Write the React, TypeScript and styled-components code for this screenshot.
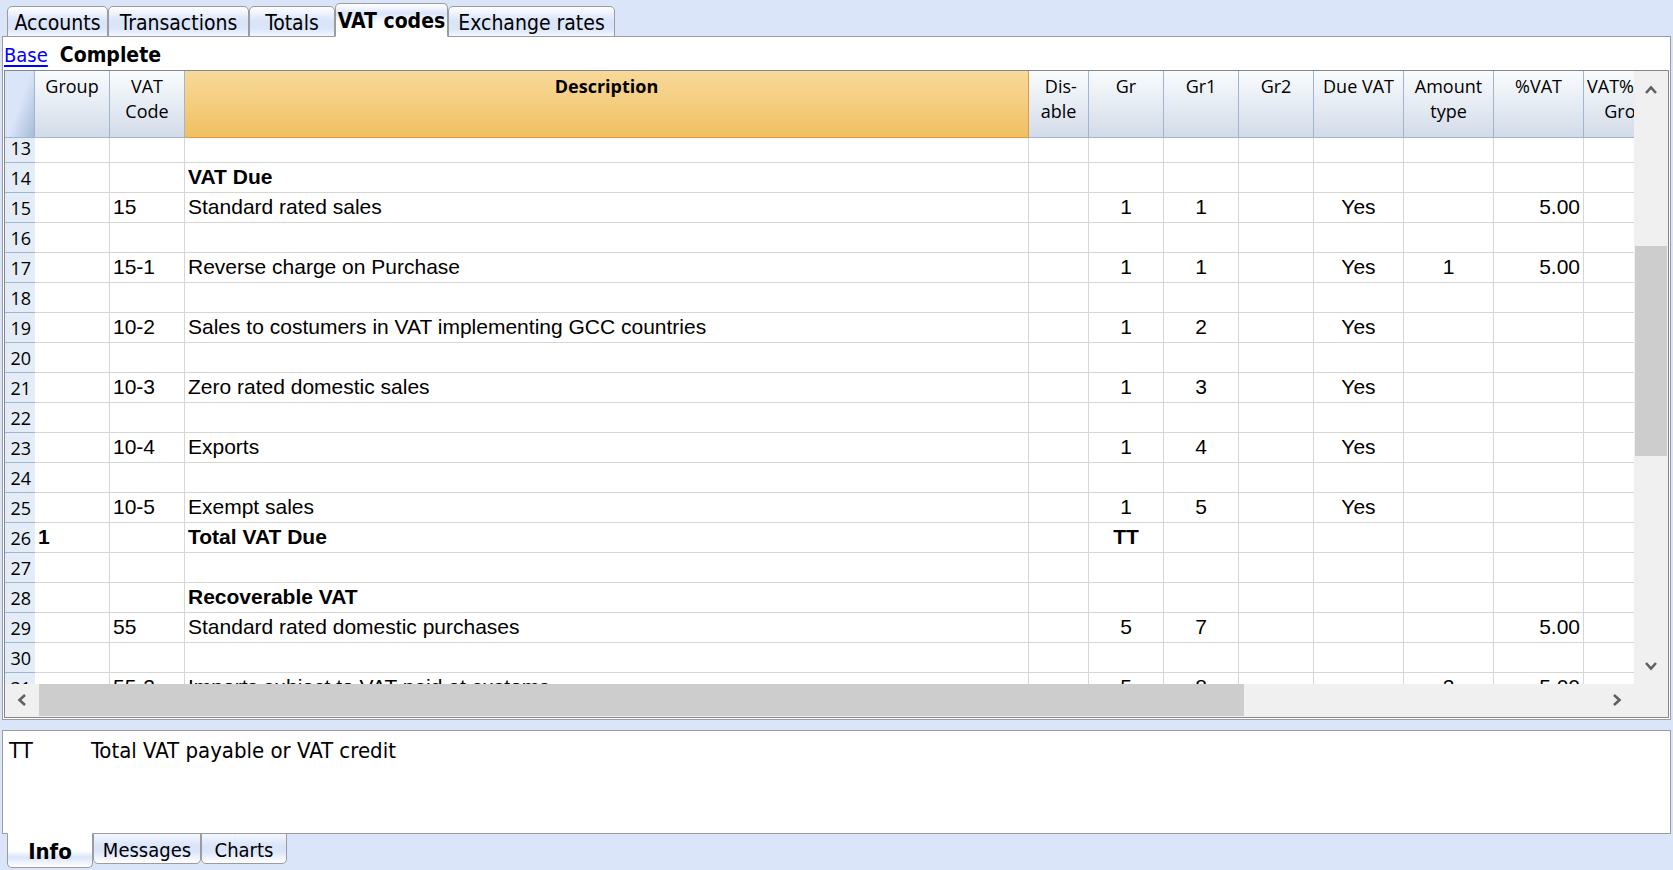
import React from "react";
import styled, { createGlobalStyle, css } from "styled-components";

const uiFont = '"DejaVu Sans Condensed", "Noto Sans", sans-serif';
const headFont = '"Open Sans", "Noto Sans", sans-serif';
const cellFont = '"Liberation Sans", Arial, sans-serif';

const GlobalStyle = createGlobalStyle`
  *, *::before, *::after { box-sizing: border-box; }
  body { margin: 0; background: #dbe5fa; color: #000; }
`;

const Page = styled.div`
  display: flex;
  flex-direction: column;
  height: 100vh;
  padding: 3px 2px 2px;
  font-family: ${uiFont};
  font-size: 21px;
`;

const TabBar = styled.nav<{ $bottom?: boolean }>`
  display: flex;
  align-items: ${(p) => (p.$bottom ? "flex-start" : "flex-end")};
  flex: none;
  height: ${(p) => (p.$bottom ? 35 : 34)}px;
  padding-left: 5px;
  position: relative;
  ${(p) => (p.$bottom ? "margin-top: -1px;" : "margin-bottom: -1px;")}
`;

const Tab = styled.button<{ $width: number; $active?: boolean; $bottom?: boolean }>`
  flex: none;
  display: flex;
  align-items: center;
  justify-content: center;
  width: ${(p) => p.$width}px;
  height: ${(p) => (p.$active ? 34 : 31)}px;
  padding: 2px 0 0;
  border: 1px solid #9c9c9c;
  font-family: ${uiFont};
  font-size: ${(p) => (p.$bottom ? 20 : 21)}px;
  line-height: 28px;
  color: #000;
  white-space: nowrap;
  ${(p) =>
    p.$bottom
      ? css`
          border-radius: 0 0 5px 5px;
          background: linear-gradient(#f2f6fe, #dbe5fa 40%, #dbe5fa 60%, #fff);
        `
      : css`
          border-radius: 5px 5px 0 0;
          background: linear-gradient(#fff, #dbe5fa 45%, #dbe5fa 75%, #f2f6fe);
        `}
  ${(p) =>
    p.$active &&
    css`
      font-weight: bold;
      ${p.$bottom
        ? "height: 35px; font-size: 22px; border-top-color: #fff; background: linear-gradient(#fff 50%, #dbe5fa 70%, #fff);"
        : "border-bottom-color: #fff; background: linear-gradient(#fff, #dbe5fa 30%, #fff 60%);"}
    `}
`;

const Workspace = styled.main`
  flex: 1;
  min-height: 0;
  display: flex;
  flex-direction: column;
  border: 1px solid #9c9c9c;
  background: #fff;
  padding: 0 1px 1px;
`;

const Views = styled.div`
  display: flex;
  align-items: center;
  gap: 12px;
  flex: none;
  height: 33px;
  padding-top: 2px;
`;

const ViewLink = styled.a`
  font-size: 20px;
  color: #00f;
  text-underline-offset: 3px;
`;

const Grid = styled.section`
  flex: 1;
  min-height: 0;
  display: grid;
  grid-template-columns: minmax(0, 1fr) 34px;
  grid-template-rows: minmax(0, 1fr) 33px;
  border: 1px solid #828790;
  background: #f0f0f0;
`;

const Viewport = styled.div`
  overflow: hidden;
  background: #fff;
`;

const Table = styled.table`
  width: calc(100% + 40px);
  table-layout: fixed;
  border-collapse: separate;
  border-spacing: 0;
  font-family: ${cellFont};
  font-size: 21px;
`;

const HeadCell = styled.th<{ $selected?: boolean }>`
  height: 67px;
  padding: 3px 0 0;
  vertical-align: top;
  font-family: ${headFont};
  font-size: 18px;
  line-height: 25px;
  font-weight: ${(p) => (p.$selected ? "bold" : "normal")};
  white-space: pre-line;
  border-right: 1px solid ${(p) => (p.$selected ? "#e8983a" : "#9fb6ce")};
  border-bottom: 1px solid ${(p) => (p.$selected ? "#e8983a" : "#9fb6ce")};
  background: ${(p) =>
    p.$selected
      ? "linear-gradient(#f8d99a, #f0c061)"
      : "linear-gradient(#f9fcfd, #d3dbe9)"};
`;

const CornerCell = styled.th`
  height: 67px;
  padding: 0;
  border-right: 1px solid #9fb6ce;
  border-bottom: 1px solid #9fb6ce;
  background: linear-gradient(110deg, #dbe5fa 50%, #a5bcd6);
`;

const RowNumber = styled.th`
  padding: 0 4px 4px 0;
  vertical-align: bottom;
  text-align: right;
  font-family: ${headFont};
  font-size: 18px;
  line-height: 20px;
  font-weight: normal;
  background: #e4ecf7;
  border-bottom: 1px solid #9fb6ce;
`;

const Row = styled.tr<{ $bold?: boolean; $cut?: boolean }>`
  height: ${(p) => (p.$cut ? 25 : 30)}px;
  font-weight: ${(p) => (p.$bold ? "bold" : "normal")};
`;

const Cell = styled.td<{ $align?: "left" | "center" | "right" }>`
  padding: 0 3px 3px;
  vertical-align: bottom;
  text-align: ${(p) => p.$align ?? "left"};
  line-height: 24px;
  white-space: nowrap;
  border-right: 1px solid #d6d6d6;
  border-bottom: 1px solid #d6d6d6;
`;

const VerticalBar = styled.div`
  display: flex;
  flex-direction: column;
  padding: 0 1px;
`;

const HorizontalBar = styled.div`
  display: flex;
  padding: 0 0 1px;
`;

const ArrowButton = styled.button`
  flex: none;
  display: flex;
  align-items: center;
  justify-content: center;
  width: 34px;
  height: 32px;
  padding: 0;
  border: 0;
  background: none;
  ${VerticalBar} & {
    width: 32px;
    height: 38px;
  }
`;

const Track = styled.div<{ $before: number; $thumb: number; $after: number; $vertical?: boolean }>`
  flex: 1;
  min-width: 0;
  min-height: 0;
  display: grid;
  ${(p) => {
    const t = `${p.$before}fr ${p.$thumb}fr ${p.$after}fr`;
    return p.$vertical ? `grid-template-rows: ${t};` : `grid-template-columns: ${t};`;
  }}
`;

const Thumb = styled.div<{ $vertical?: boolean }>`
  background: #cdcdcd;
  ${(p) => (p.$vertical ? "grid-row: 2;" : "grid-column: 2;")}
`;

const InfoPanel = styled.section`
  flex: none;
  display: flex;
  min-height: 104px;
  margin-top: 10px;
  padding: 7px 6px;
  border: 1px solid #9c9c9c;
  background: #fff;
  font-size: 22px;
  line-height: 26px;
`;

const InfoCode = styled.span`
  width: 82px;
`;

const arrows = {
  up: "M1 9 L6 3.5 L11 9",
  down: "M1 4 L6 9.5 L11 4",
  left: "M9 1 L3.5 6 L9 11",
  right: "M3 1 L8.5 6 L3 11",
};

function Arrow({ to }: { to: keyof typeof arrows }) {
  return (
    <ArrowButton aria-label={`Scroll ${to}`}>
      <svg width="12" height="12" viewBox="0 0 12 12" fill="none" stroke="#606060" strokeWidth="2.6">
        <path d={arrows[to]} />
      </svg>
    </ArrowButton>
  );
}

const columns: { label: string; width?: number; align?: "left" | "center" | "right"; selected?: boolean }[] = [
  { label: "Group", width: 75 },
  { label: "VAT\nCode", width: 75 },
  { label: "Description", selected: true },
  { label: "\u00a0Dis-\nable", width: 60 },
  { label: "Gr", width: 75, align: "center" },
  { label: "Gr1", width: 75, align: "center" },
  { label: "Gr2", width: 75, align: "center" },
  { label: "Due VAT", width: 90, align: "center" },
  { label: "Amount\ntype", width: 90, align: "center" },
  { label: "%VAT", width: 90, align: "right" },
  { label: "VAT% on\u00a0\u00a0\nGross", width: 90 },
];

type RowData = { cells?: string[]; bold?: boolean };

const rows: RowData[] = [
  {},
  { bold: true, cells: ["", "", "VAT Due"] },
  { cells: ["", "15", "Standard rated sales", "", "1", "1", "", "Yes", "", "5.00"] },
  {},
  { cells: ["", "15-1", "Reverse charge on Purchase", "", "1", "1", "", "Yes", "1", "5.00"] },
  {},
  { cells: ["", "10-2", "Sales to costumers in VAT implementing GCC countries", "", "1", "2", "", "Yes"] },
  {},
  { cells: ["", "10-3", "Zero rated domestic sales", "", "1", "3", "", "Yes"] },
  {},
  { cells: ["", "10-4", "Exports", "", "1", "4", "", "Yes"] },
  {},
  { cells: ["", "10-5", "Exempt sales", "", "1", "5", "", "Yes"] },
  { bold: true, cells: ["1", "", "Total VAT Due", "", "TT"] },
  {},
  { bold: true, cells: ["", "", "Recoverable VAT"] },
  { cells: ["", "55", "Standard rated domestic purchases", "", "5", "7", "", "", "", "5.00"] },
  {},
  { cells: ["", "55-2", "Imports subject to VAT paid at customs", "", "5", "8", "", "", "2", "5.00"] },
];

export default function App() {
  return (
    <>
      <GlobalStyle />
      <Page>
        <TabBar>
          <Tab $width={101}>Accounts</Tab>
          <Tab $width={141}>Transactions</Tab>
          <Tab $width={86}>Totals</Tab>
          <Tab $width={113} $active>VAT codes</Tab>
          <Tab $width={167}>Exchange rates</Tab>
        </TabBar>
        <Workspace>
          <Views>
            <ViewLink href="#base">Base</ViewLink>
            <strong>Complete</strong>
          </Views>
          <Grid>
            <Viewport>
              <Table>
                <colgroup>
                  <col style={{ width: 30 }} />
                  {columns.map((c) => (
                    <col key={c.label} style={{ width: c.width }} />
                  ))}
                </colgroup>
                <thead>
                  <tr>
                    <CornerCell />
                    {columns.map((c) => (
                      <HeadCell key={c.label} scope="col" $selected={c.selected}>{c.label}</HeadCell>
                    ))}
                  </tr>
                </thead>
                <tbody>
                  {rows.map((row, i) => (
                    <Row key={i} $bold={row.bold} $cut={i === 0}>
                      <RowNumber scope="row">{13 + i}</RowNumber>
                      {columns.map((c, j) => (
                        <Cell key={c.label} $align={c.align}>{row.cells?.[j]}</Cell>
                      ))}
                    </Row>
                  ))}
                </tbody>
              </Table>
            </Viewport>
            <VerticalBar>
              <Arrow to="up" />
              <Track $vertical $before={137} $thumb={210} $after={190}><Thumb $vertical /></Track>
              <Arrow to="down" />
            </VerticalBar>
            <HorizontalBar>
              <Arrow to="left" />
              <Track $before={0} $thumb={1205} $after={356}><Thumb /></Track>
              <Arrow to="right" />
            </HorizontalBar>
          </Grid>
        </Workspace>
        <InfoPanel>
          <InfoCode>TT</InfoCode>
          <span>Total VAT payable or VAT credit</span>
        </InfoPanel>
        <TabBar $bottom>
          <Tab $bottom $width={86} $active>Info</Tab>
          <Tab $bottom $width={108}>Messages</Tab>
          <Tab $bottom $width={86}>Charts</Tab>
        </TabBar>
      </Page>
    </>
  );
}
